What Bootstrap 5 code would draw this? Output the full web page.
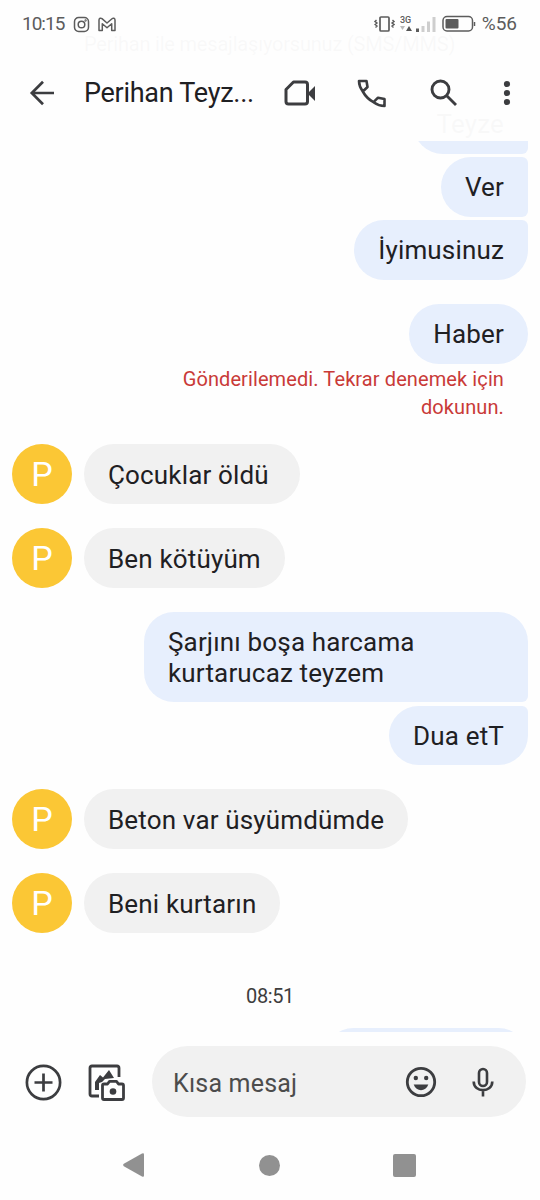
<!DOCTYPE html>
<html lang="tr">
<head>
<meta charset="utf-8">
<meta name="viewport" content="width=device-width, initial-scale=1">
<title>Mesajlar</title>
<link href="https://cdn.jsdelivr.net/npm/bootstrap@5.3.0/dist/css/bootstrap.min.css" rel="stylesheet">
<style>
body{background:#fefefe;font-family:Roboto,sans-serif;color:#1f2023}
.phone{width:540px;height:1200px;overflow:hidden}
svg{display:block;flex:none;fill:none;stroke:#3c3d40}
.topbar{height:141px;background:rgba(254,254,254,.975);z-index:2}
.statusbar{height:46px;padding:2px 23px 0 22px;color:#5c5c5c;font-size:19px}
.statusbar svg{stroke:#5c5c5c}
.clock{width:42px;letter-spacing:-1px;font-size:19px}
.toolbar{height:94px;padding:0 29px 0 29px}
.title-text{font:27px/36px Roboto,sans-serif;width:176px;margin-left:29px;letter-spacing:-.28px;white-space:nowrap}
.chat{padding:29px 12px 0}
.intro{font-size:20px;line-height:30px;height:65px;padding-left:72px;letter-spacing:-.2px}
.bubble{font-size:26px;line-height:31px;padding:15px 24px 13px;border-radius:30px;letter-spacing:.16px;white-space:nowrap}
.one{height:59.5px}
.out{background:#e7effd}
.in{background:#f1f1f1;padding-top:15.5px;padding-bottom:13.5px;height:60px}
.joined-top{border-top-right-radius:6px}
.joined-bottom{border-bottom-right-radius:6px}
.avatar{width:60px;height:60px;background:#fbc735;color:#fff;font:34px/61px Roboto,sans-serif;margin-right:12px}
.failed{color:#c93a38;font-size:20px;line-height:28px;width:350px;margin:1.5px 24px 23px 0;letter-spacing:.1px}
.time{font-size:20px;line-height:26px;color:#3d3d3d;margin:50px 0 18.5px;letter-spacing:-.4px}
.composer{height:168px;background:#fefefe;z-index:2;padding:14px 14px 0 25px}
.composer-icon{margin-top:2px}
.entry{width:374px;height:71px;background:#f1f1f1;padding:0 32px 0 21px;color:#4c4c4c;font-size:25px;letter-spacing:.2px}
.sysnav{height:70px;padding:0 124px 0 123px}
.sysnav svg{fill:#919191;stroke:none}
</style>
</head>
<body>
<div class="phone position-relative">
  <header class="topbar position-absolute top-0 start-0 w-100">
    <div class="statusbar d-flex align-items-center">
      <span class="clock">10:15</span>
      <svg style="margin-left:9px" width="17" height="17" viewBox="0 0 17 17" stroke-width="1.5"><rect x="1.5" y="1.5" width="14" height="14" rx="4.2"/><circle cx="8.5" cy="8.5" r="3.3"/><circle cx="12.6" cy="4.5" r=".4"/></svg>
      <svg style="margin-left:8px" width="18" height="15" viewBox="0 0 18 15" stroke-width="1.5" stroke-linejoin="round"><path d="M1 3C1 1.200 2.800.7 4 1.700L9 6l5-4.300C15.200.7 17 1.200 17 3v10.500h-3.300V6.800L9 10.800 4.300 6.800v6.700H1z"/></svg>
      <svg class="ms-auto" width="21" height="18" viewBox="0 0 21 18" stroke-width="1.7"><rect x="6" y="2" width="9" height="14" rx="1"/><path d="M2.500 5 1 6.500l2 1.500-2 1.500 2 1.500-1.500 1.500M18.500 5 20 6.500 18 8l2 1.500-2 1.500 1.500 1.500" stroke-width="1.400"/></svg>
      <svg style="margin-left:5px" width="36" height="18" viewBox="0 0 36 18"><text x="0" y="8" font-size="9" font-weight="500" fill="#5c5c5c" stroke="none">3G</text><path d="M0 11h5l-2.500 4z" fill="#bbb" stroke="none"/><path d="M6 16 9 11l3 5z" fill="#555" stroke="none"/><path d="M17.500 17v-3.500" stroke-width="3"/><path d="M23 17v-6M28.500 17V6.500M34 17V2" stroke="#cecece" stroke-width="3"/></svg>
      <svg style="margin-left:6px" width="34" height="18" viewBox="0 0 34 18" stroke-width="1.500"><rect x="1" y="1.500" width="29.500" height="14.500" rx="4"/><rect x="3.500" y="4" width="13" height="9.500" rx="1" fill="#5c5c5c" stroke="none"/><path d="M32.500 7v4"/></svg>
      <span style="margin-left:6px">%56</span>
    </div>
    <div class="toolbar d-flex align-items-center">
      <svg width="26" height="26" viewBox="0 0 26 26" stroke-width="2.700"><path d="M25 13H3M14 1.800 2.800 13 14 24.200"/></svg>
      <span class="title-text">Perihan Teyz...</span>
      <svg style="margin-left:24px" width="32" height="26" viewBox="0 0 32 26" stroke-width="3" stroke-linejoin="round"><path d="M9.500 2H21q2.500 0 2.500 2.500v17q0 2.500-2.500 2.500H4.500Q2 24 2 21.500V9.500z"/><path d="m23.500 13.500 7.500-7.500v15z" fill="#3c3d40" stroke="none"/></svg>
      <svg style="margin-left:41px" width="29" height="29" viewBox="0 0 29 29" stroke-width="2.600" stroke-linejoin="round"><path d="M2 2H9.500l1 6-4.700 4.500C3.300 9 2 5.500 2 2zM5.800 12.500C8.300 17 12 20.700 16.500 23.200L21 18.700l6.500 1.300v7c-4 0-7.500-1.300-11-3.800"/></svg>
      <svg style="margin-left:44px" width="28" height="28" viewBox="0 0 28 28" stroke-width="2.900"><circle cx="10.500" cy="10.500" r="8.500"/><path d="m16.500 16.500 9.500 9.500"/></svg>
      <svg class="ms-auto" width="8" height="26" viewBox="0 0 8 26" style="fill:#3c3d40;stroke:none"><circle cx="4" cy="4" r="3.100"/><circle cx="4" cy="13" r="3.100"/><circle cx="4" cy="22" r="3.100"/></svg>
    </div>
  </header>

  <main class="chat d-flex flex-column">
    <div class="intro"><span>Perihan ile mesajlaşıyorsunuz (SMS/MMS)</span></div>
    <div class="bubble one out joined-bottom align-self-end"><span>Teyze</span></div>
    <div class="bubble one out joined-top joined-bottom align-self-end" style="margin-top:3.500px"><span>Ver</span></div>
    <div class="bubble one out joined-top align-self-end" style="margin-top:3.500px"><span>İyimusinuz</span></div>
    <div class="bubble one out align-self-end" style="margin-top:24.500px"><span>Haber</span></div>
    <div class="failed align-self-end text-end"><span>Gönderilemedi. Tekrar denemek için dokunun.</span></div>
    <div class="d-flex mb-4"><div class="avatar rounded-circle text-center">P</div><div class="bubble in" style="width:216px"><span>Çocuklar öldü</span></div></div>
    <div class="d-flex mb-4"><div class="avatar rounded-circle text-center">P</div><div class="bubble in"><span>Ben kötüyüm</span></div></div>
    <div class="bubble out joined-bottom align-self-end" style="width:384px"><span>Şarjını boşa harcama<br>kurtarucaz teyzem</span></div>
    <div class="bubble one out joined-top align-self-end mb-4" style="margin-top:3.500px"><span>Dua etT</span></div>
    <div class="d-flex mb-4"><div class="avatar rounded-circle text-center">P</div><div class="bubble in"><span>Beton var üsyümdümde</span></div></div>
    <div class="d-flex"><div class="avatar rounded-circle text-center">P</div><div class="bubble in"><span>Beni kurtarın</span></div></div>
    <div class="time text-center">08:51</div>
    <div class="bubble one out align-self-end" style="width:204px"></div>
  </main>

  <footer class="composer position-absolute bottom-0 start-0 w-100">
    <div class="d-flex align-items-center">
      <svg class="composer-icon" width="37" height="37" viewBox="0 0 37 37" stroke-width="2.700"><circle cx="18.500" cy="18.500" r="16.600"/><path d="M18.500 9.500v18M9.500 18.500h18"/></svg>
      <svg class="composer-icon" style="margin-left:26px" width="37" height="37" viewBox="0 0 37 37" stroke-width="2.800" stroke-linejoin="round"><path d="M31 13V4q0-2-2-2H4Q2 2 2 4v26q0 2 2 2h7"/><path d="M7 26v-8l5-7 3 2.500L21 6l5 8-9 1-3 3-3 1v7z" fill="#3c3d40" stroke="none"/><path d="M16 20h3.500l2-2.700h7l2 2.700H34q1.500 0 1.500 1.500V34q0 1.500-1.500 1.500H16q-1.500 0-1.500-1.500V21.500Q14.500 20 16 20z"/><circle cx="25" cy="27.500" r="3.300" fill="#3c3d40" stroke="none"/></svg>
      <div class="entry rounded-pill d-flex align-items-center ms-auto">
        <span class="pt-1">Kısa mesaj</span>
        <svg class="ms-auto" width="32" height="32" viewBox="0 0 32 32" stroke-width="2.800"><circle cx="16" cy="16" r="13.700"/><g fill="#3c3d40" stroke="none"><circle cx="10.800" cy="12" r="2.200"/><circle cx="21.200" cy="12" r="2.200"/><path d="M8.700 18.500h14.600c-2.500 7.500-12.100 7.500-14.600 0z"/></g></svg>
        <svg style="margin-left:35px" width="22" height="30" viewBox="0 0 22 30" stroke-width="2.600"><rect x="7" y="2" width="8" height="17" rx="4"/><path d="M1.700 14.500c0 11.500 18.600 11.500 18.600 0M11 23v6.500"/></svg>
      </div>
    </div>
    <div class="sysnav position-absolute start-0 bottom-0 w-100 d-flex align-items-center justify-content-between">
      <svg width="21" height="24" viewBox="0 0 21 24"><path d="M21 1.500v21q0 2-2 1L.8 13.200Q-.5 12 .8 10.800L19 .5q2-1 2 1z"/></svg>
      <svg width="23" height="21" viewBox="0 0 23 21"><circle cx="12.500" cy="10.500" r="10.500"/></svg>
      <svg width="23" height="23" viewBox="0 0 23 23"><rect width="23" height="23" rx="2"/></svg>
    </div>
  </footer>
</div>
<script src="https://cdn.jsdelivr.net/npm/bootstrap@5.3.0/dist/js/bootstrap.bundle.min.js"></script>
</body>
</html>
